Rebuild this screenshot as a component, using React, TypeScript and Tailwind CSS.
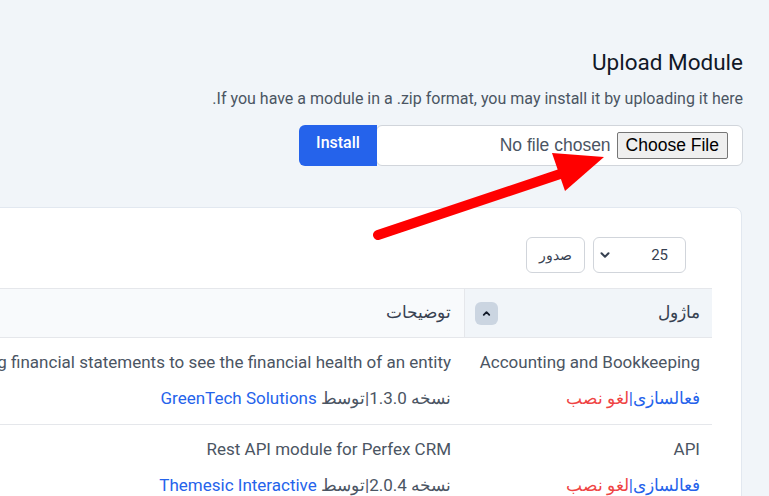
import React from "react";

const modules = [
  {
    name: "Accounting and Bookkeeping",
    desc: "Preparing financial statements to see the financial health of an entity",
    version: "1.3.0",
    author: "GreenTech Solutions",
  },
  {
    name: "API",
    desc: "Rest API module for Perfex CRM",
    version: "2.0.4",
    author: "Themesic Interactive",
  },
];

const Arrow = () => (
  <svg
    className="absolute left-0 top-0 pointer-events-none"
    width="769"
    height="496"
    viewBox="0 0 769 496"
  >
    <line x1="378" y1="235" x2="572" y2="170" stroke="#ff0000" strokeWidth="10" strokeLinecap="round" />
    <polygon points="604,157 552,153 565,191" fill="#ff0000" />
  </svg>
);

export default function App() {
  return (
    <div
      dir="rtl"
      className="relative w-[769px] h-[496px] overflow-hidden bg-[#f1f5f9] font-['Roboto',sans-serif]"
    >
      <div className="pr-[26px] pt-[47px]">
        <h2 className="text-[22.5px] leading-[30px] text-[#111827]">Upload Module</h2>
        <p className="mt-[11px] text-[16px] leading-[22px] text-[#4b5563]">
          If you have a module in a .zip format, you may install it by uploading it here.
        </p>
        <div className="mt-[15px] flex h-[41px]">
          <div className="w-[367px] flex items-center gap-[6px] pr-[14px] bg-white border border-[#d1d5db] rounded-md">
            <span className="font-['Liberation_Sans',sans-serif] text-[17.5px] leading-[25px] px-[8px] border border-[#767676] bg-[#efefef] rounded-[2px] text-black">
              Choose File
            </span>
            <span className="font-['Liberation_Sans',sans-serif] text-[17.5px] text-[#4b5563]">
              No file chosen
            </span>
          </div>
          <button className="w-[78px] -mr-[1px] bg-[#2563eb] text-white text-[16px] font-medium rounded-l-md rounded-r-none pb-[5px]">
            Install
          </button>
        </div>
      </div>

      <div className="mt-[41px] mr-[27px] w-[1100px] h-[400px] bg-white border border-[#e2e8f0] rounded-tr-lg rounded-tl-lg pt-[29px] pr-[29px]">
        <div className="flex gap-[8px] pr-[26px]">
          <div className="w-[93px] h-[36px] flex items-center justify-between pr-[17px] pl-[4px] border border-[#d1d5db] rounded-md text-[15px] text-[#374151]">
            <span>25</span>
            <svg width="14" height="14" viewBox="0 0 24 24" fill="none" stroke="#374151" strokeWidth="3.5" strokeLinecap="round" strokeLinejoin="round">
              <path d="M6 9l6 6 6-6" />
            </svg>
          </div>
          <div className="w-[59px] h-[36px] flex items-center justify-center border border-[#d1d5db] rounded-md text-[14px] text-[#374151]">
            صدور
          </div>
        </div>

        <div className="mt-[15px] w-[1040px] text-[17px]">
          <div className="flex h-[50px] border-y border-[#e5e7eb] bg-[#f8fafc]">
            <div className="w-[248px] flex items-center justify-between pr-[12px] pl-[10px] bg-[#f1f5f9] border-l border-[#e5e7eb] text-[#374151]">
              <span>ماژول</span>
              <span className="w-[23px] h-[23px] flex items-center justify-center rounded-md bg-[#cbd5e1]">
                <svg width="11" height="11" viewBox="0 0 24 24" fill="none" stroke="#111827" strokeWidth="4" strokeLinecap="round" strokeLinejoin="round">
                  <path d="M6 15l6-6 6 6" />
                </svg>
              </span>
            </div>
            <div className="flex-1 flex items-center pr-[13px] text-[#374151]">توضیحات</div>
          </div>
          {modules.map((m) => (
            <div key={m.name} className="flex h-[87px] border-b border-[#e5e7eb] text-[#4b5563]">
              <div className="w-[248px] pr-[12px] pt-[12px]">
                <div className="leading-[24px]">{m.name}</div>
                <div className="mt-[12px] leading-[24px]">
                  <span className="text-[#2563eb]">فعالسازی|</span>
                  <span className="text-[#ef4444]">لغو نصب</span>
                </div>
              </div>
              <div className="flex-1 pr-[13px] pt-[12px] whitespace-nowrap">
                <div className="leading-[24px]">{m.desc}</div>
                <div className="mt-[12px] leading-[24px]">
                  نسخه {m.version}|توسط <span className="text-[#2563eb]">{m.author}</span>
                </div>
              </div>
            </div>
          ))}
        </div>
      </div>

      <Arrow />
    </div>
  );
}
